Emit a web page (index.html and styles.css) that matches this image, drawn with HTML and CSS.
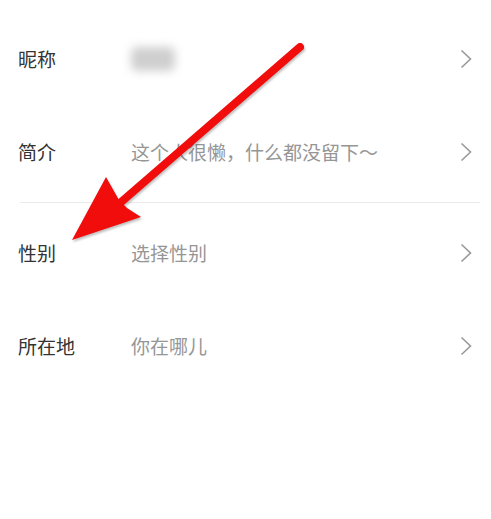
FILE: index.html
```html
<!DOCTYPE html>
<html lang="zh-CN">
<head>
    <meta charset="UTF-8">
    <meta name="viewport" content="width=device-width, initial-scale=1.0">
    <title>编辑资料</title>
    <link rel="stylesheet" href="styles.css">
</head>
<body>
    <div class="profile">
        <div class="group">
            <div class="row">
                <span class="label">昵称</span>
                <span class="value"><span class="nick-blur"></span></span>
                <svg class="chevron" viewBox="0 0 12 20"><path d="M1.5 1.5 L10.5 10 L1.5 18.5"/></svg>
            </div>
            <div class="row">
                <span class="label">简介</span>
                <span class="value">这个人很懒，什么都没留下～</span>
                <svg class="chevron" viewBox="0 0 12 20"><path d="M1.5 1.5 L10.5 10 L1.5 18.5"/></svg>
            </div>
        </div>
        <div class="divider"></div>
        <div class="group">
            <div class="row">
                <span class="label">性别</span>
                <span class="value">选择性别</span>
                <svg class="chevron" viewBox="0 0 12 20"><path d="M1.5 1.5 L10.5 10 L1.5 18.5"/></svg>
            </div>
            <div class="row">
                <span class="label">所在地</span>
                <span class="value">你在哪儿</span>
                <svg class="chevron" viewBox="0 0 12 20"><path d="M1.5 1.5 L10.5 10 L1.5 18.5"/></svg>
            </div>
        </div>

        <!-- red pointer drawn over the list -->
        <svg class="pointer" viewBox="0 0 491 519">
            <line x1="300" y1="47" x2="120" y2="203" />
            <polygon points="72,240 106,177 119,200 127,208 141,217" />
        </svg>
    </div>
</body>
</html>
```

FILE: styles.css
```css
body {
    margin: 0;
    padding: 0;
    background-color: #fff;
    font-family: "Noto Sans CJK SC", "Noto Sans", sans-serif;
}
.profile {
    position: relative;
    height: 519px;
    padding-top: 12px;
    box-sizing: border-box;
}
.row {
    display: flex;
    align-items: center;
    height: 93px;
    padding: 0 19px 0 18px;
}
.label {
    width: 113px;
    font-size: 19px;
    color: #333;
}
.value {
    flex: 1;
    font-size: 19px;
    color: #969696;
    display: flex;
    align-items: center;
}
.nick-blur {
    display: block;
    width: 44px;
    height: 24px;
    margin-left: 0;
    background-color: #cfcfcf;
    border-radius: 6px;
    filter: blur(5px);
}
.chevron {
    width: 12px;
    height: 20px;
}
.chevron path {
    fill: none;
    stroke: #999;
    stroke-width: 1.6;
}
.divider {
    height: 1px;
    margin: 4px 11px 3px 20px;
    background-color: #ebebeb;
}
.pointer {
    position: absolute;
    left: 0;
    top: 0;
    width: 491px;
    height: 519px;
    filter: drop-shadow(1px 2px 1px rgba(0,0,0,0.25));
}
.pointer line {
    stroke: #f20d0d;
    stroke-width: 8;
    stroke-linecap: round;
}
.pointer polygon {
    fill: #f20d0d;
}
```
